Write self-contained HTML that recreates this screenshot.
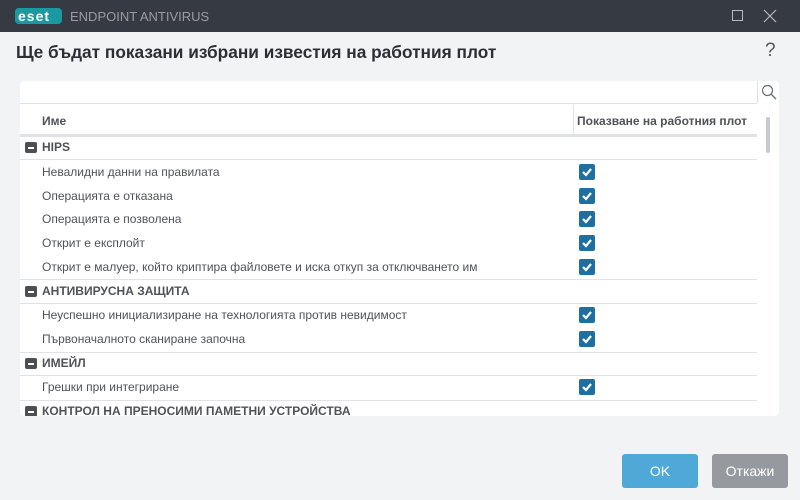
<!DOCTYPE html>
<html><head><meta charset="utf-8"><style>
*{margin:0;padding:0;box-sizing:border-box}
body{width:800px;height:500px;background:#f2f3f5;font-family:"Liberation Sans",sans-serif;position:relative;overflow:hidden;color:#505257}
.tb{position:absolute;left:0;top:0;width:800px;height:32px;background:#363a42}
.a{position:absolute;white-space:nowrap}
.panel{position:absolute;left:20px;top:81px;width:759px;height:335px;background:#fff;border-radius:4px}
.line{position:absolute;left:20px;width:737px;height:1px;background:#e1e2e4}
.it{position:absolute;left:42px;font-size:12px;color:#505257;white-space:nowrap}
.gr{position:absolute;left:42px;font-size:12px;font-weight:bold;color:#505257;white-space:nowrap}
.gi{position:absolute;left:25px;width:12px;height:11px;background:#4d4f54;border-radius:2px}
.gi:after{content:"";position:absolute;left:3px;top:5px;width:6px;height:2px;background:#fff}
.cb{position:absolute;left:579px;width:16px;height:16px;background:#1f6fa0;border-radius:2px}
.cb svg{position:absolute;left:2px;top:2px}
.btn{position:absolute;top:454px;height:34px;width:76px;border-radius:3px;color:#fff;font-size:14px;text-align:center;line-height:34px}
</style></head><body>
<div class="tb"></div>
<div class="a" style="left:15px;top:8px;width:47px;height:16px;background:#1a9aa0;border-radius:4px"></div>
<div class="a" style="left:18px;top:8px;font:bold 14px 'Liberation Sans';color:#fff;letter-spacing:1px;line-height:16px">eset</div>
<div class="a" style="left:70px;top:9px;font-size:13px;color:#9a9ca2;line-height:16px">ENDPOINT ANTIVIRUS</div>
<div class="a" style="left:732px;top:10px;width:11px;height:11px;border:1px solid #b8babe"></div>
<svg class="a" style="left:763px;top:9px" width="14" height="14"><path d="M1 1L13 13M13 1L1 13" stroke="#b8babe" stroke-width="1.2"/></svg>
<div class="a" style="left:16px;top:42px;font-size:17.3px;font-weight:bold;color:#2c2e33">Ще бъдат показани избрани известия на работния плот</div>
<div class="a" style="left:765px;top:40px;font-size:19px;color:#55575c">?</div>
<div class="panel"></div>
<div class="line" style="top:103px;width:737px"></div>
<svg class="a" style="left:761px;top:84px" width="16" height="16"><circle cx="6.5" cy="6.5" r="5" fill="none" stroke="#6b6d72" stroke-width="1.2"/><path d="M10 10l5 5" stroke="#6b6d72" stroke-width="1.3"/></svg>
<div class="a" style="left:757px;top:81px;width:1px;height:22px;background:#e1e2e4"></div>
<div class="gr" style="top:114px">Име</div>
<div class="a" style="left:573px;top:105px;width:1px;height:30px;background:#e1e2e4"></div>
<div class="gr" style="left:577px;top:114px">Показване на работния плот</div>
<div class="line" style="top:134px;height:3px"></div>
<div class="a" style="left:766px;top:117px;width:4px;height:36px;background:#c9cacd;border-radius:2px"></div>

<div class="gi" style="top:142px"></div><div class="gr" style="top:140px">HIPS</div>
<div class="line" style="top:159px"></div>
<div class="it" style="top:165px">Невалидни данни на правилата</div>
<div class="it" style="top:189px">Операцията е отказана</div>
<div class="it" style="top:212px">Операцията е позволена</div>
<div class="it" style="top:236px">Открит е експлойт</div>
<div class="it" style="top:260px">Открит е малуер, който криптира файловете и иска откуп за отключването им</div>
<div class="line" style="top:279px"></div>
<div class="gi" style="top:286px"></div><div class="gr" style="top:284px">АНТИВИРУСНА ЗАЩИТА</div>
<div class="line" style="top:303px"></div>
<div class="it" style="top:308px">Неуспешно инициализиране на технологията против невидимост</div>
<div class="it" style="top:332px">Първоначалното сканиране започна</div>
<div class="line" style="top:352px"></div>
<div class="gi" style="top:358px"></div><div class="gr" style="top:356px">ИМЕЙЛ</div>
<div class="line" style="top:375px"></div>
<div class="it" style="top:380px">Грешки при интегриране</div>
<div class="line" style="top:400px"></div>
<div class="gi" style="top:406px"></div><div class="gr" style="top:404px">КОНТРОЛ НА ПРЕНОСИМИ ПАМЕТНИ УСТРОЙСТВА</div>
<div class="a" style="left:0;top:416px;width:800px;height:84px;background:#f2f3f5"></div>

<div class="cb" style="top:164px"><svg width="12" height="12"><path d="M2 6l3 3 5-6" fill="none" stroke="#fff" stroke-width="2.2"/></svg></div>
<div class="cb" style="top:188px"><svg width="12" height="12"><path d="M2 6l3 3 5-6" fill="none" stroke="#fff" stroke-width="2.2"/></svg></div>
<div class="cb" style="top:211px"><svg width="12" height="12"><path d="M2 6l3 3 5-6" fill="none" stroke="#fff" stroke-width="2.2"/></svg></div>
<div class="cb" style="top:235px"><svg width="12" height="12"><path d="M2 6l3 3 5-6" fill="none" stroke="#fff" stroke-width="2.2"/></svg></div>
<div class="cb" style="top:259px"><svg width="12" height="12"><path d="M2 6l3 3 5-6" fill="none" stroke="#fff" stroke-width="2.2"/></svg></div>
<div class="cb" style="top:307px"><svg width="12" height="12"><path d="M2 6l3 3 5-6" fill="none" stroke="#fff" stroke-width="2.2"/></svg></div>
<div class="cb" style="top:331px"><svg width="12" height="12"><path d="M2 6l3 3 5-6" fill="none" stroke="#fff" stroke-width="2.2"/></svg></div>
<div class="cb" style="top:379px"><svg width="12" height="12"><path d="M2 6l3 3 5-6" fill="none" stroke="#fff" stroke-width="2.2"/></svg></div>

<div class="btn" style="left:622px;background:#4ea8d8">OK</div>
<div class="btn" style="left:712px;background:#969aa0">Откажи</div>
</body></html>
